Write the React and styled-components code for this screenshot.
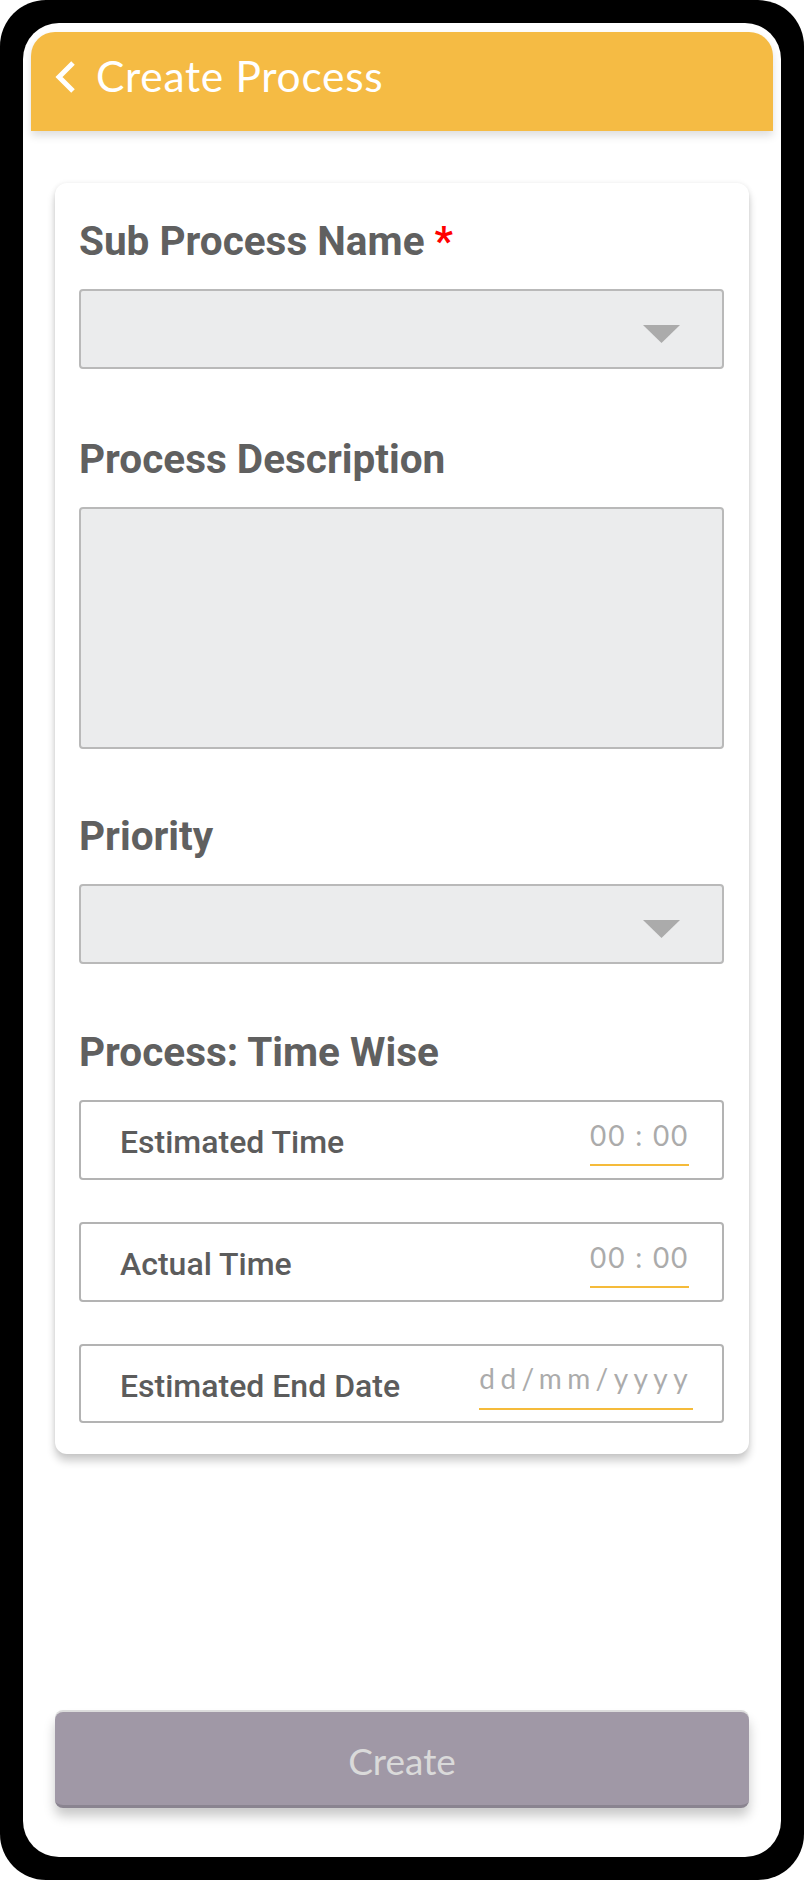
import React from "react";
import styled, { createGlobalStyle } from "styled-components";

const GlobalStyle = createGlobalStyle`
  html, body { margin: 0; padding: 0; background: #fff; }
  * { box-sizing: border-box; }
`;

const Frame = styled.div`
  width: 804px;
  height: 1880px;
  background: #000;
  border-radius: 46px;
  padding: 23px;
`;

const Screen = styled.div`
  height: 100%;
  background: #fff;
  border-radius: 36px;
  display: flex;
  flex-direction: column;
  padding: 9px 0 49px;
  overflow: hidden;
`;

const Header = styled.header`
  position: relative;
  z-index: 1;
  margin: 0 8px;
  height: 99px;
  flex-shrink: 0;
  background: #f5bb44;
  border-radius: 24px 24px 0 0;
  display: flex;
  align-items: center;
  gap: 19px;
  padding: 0 0 12px 24px;
  box-shadow: 0 5px 9px rgba(0, 0, 0, 0.13);
`;

const Title = styled.h1`
  margin: 0;
  font-family: Lato, "Open Sans", sans-serif;
  font-weight: 400;
  font-size: 42.5px;
  line-height: 1.2;
  letter-spacing: 0.7px;
  color: #fff;
`;

const Card = styled.section`
  margin: 52px 32px 0;
  background: #fff;
  border-radius: 12px;
  padding: 35px 25px 31px 24px;
  box-shadow: 0 7px 9px rgba(0, 0, 0, 0.2), 0 0 5px rgba(0, 0, 0, 0.08);
`;

const Group = styled.div`
  margin-top: ${(p) => p.$mt || 0}px;
`;

const Label = styled.div`
  font-family: Roboto, "Liberation Sans", sans-serif;
  font-weight: 700;
  font-size: 40.5px;
  line-height: 46px;
  color: #606060;
  margin-bottom: 25px;
`;

const Required = styled.span`
  color: #ff0000;
  margin-left: 10px;
`;

const Select = styled.div`
  height: 80px;
  background: #ebeced;
  border: 2px solid #b9b9b9;
  border-radius: 4px;
  display: flex;
  justify-content: flex-end;
  align-items: center;
  padding-right: 42px;
`;

const Arrow = styled.svg`
  margin-top: 10px;
  display: block;
`;

const TextArea = styled.textarea`
  display: block;
  width: 100%;
  height: 242px;
  background: #ebeced;
  border: 2px solid #b9b9b9;
  border-radius: 4px;
  resize: none;
  outline: none;
`;

const Row = styled.div`
  height: ${(p) => p.$h || 80}px;
  background: #fff;
  border: 2px solid #b3b3b3;
  border-radius: 4px;
  display: flex;
  align-items: center;
  justify-content: space-between;
  padding: 0 ${(p) => p.$pr}px 0 39px;
  margin-top: ${(p) => p.$mt || 0}px;
`;

const RowLabel = styled.span`
  font-family: Roboto, "Liberation Sans", sans-serif;
  font-weight: 500;
  font-size: 32px;
  line-height: 38px;
  color: #5c5c5c;
  margin-top: 4px;
`;

const Value = styled.span`
  font-family: Lato, "Open Sans", sans-serif;
  font-size: ${(p) => p.$fs}px;
  line-height: 1.2;
  color: #ababab;
  letter-spacing: ${(p) => p.$ls}px;
  padding-top: 5px;
  padding-bottom: ${(p) => p.$pb}px;
  border-bottom: 2px solid #f5bb3a;
  white-space: nowrap;
`;

const Button = styled.button`
  margin: auto 32px 0;
  height: 96px;
  flex-shrink: 0;
  background: #a098a6;
  border: none;
  border-bottom: 3px solid #8a8490;
  border-radius: 8px;
  box-shadow: 0 -2px 0 #dcdcdc, 0 8px 12px rgba(0, 0, 0, 0.22);
  font-family: Lato, "Open Sans", sans-serif;
  font-size: 37px;
  font-weight: 400;
  color: #dadada;
  padding: 4px 0 0;
`;

const Triangle = () => (
  <Arrow width="37" height="18" viewBox="0 0 37 18">
    <polygon points="0,0 37,0 18.5,18" fill="#ababab" />
  </Arrow>
);

const BackIcon = () => (
  <svg width="22" height="32" viewBox="0 0 22 32" style={{ display: "block", marginTop: 2 }}>
    <polyline
      points="18,2 4,16 18,30"
      fill="none"
      stroke="#fff"
      strokeWidth="5"
      strokeLinecap="butt"
      strokeLinejoin="miter"
    />
  </svg>
);

export default function App() {
  return (
    <>
      <GlobalStyle />
      <Frame>
        <Screen>
          <Header>
            <BackIcon />
            <Title>Create Process</Title>
          </Header>
          <Card>
            <Group>
              <Label>
                Sub Process Name<Required>*</Required>
              </Label>
              <Select>
                <Triangle />
              </Select>
            </Group>
            <Group $mt={67}>
              <Label>Process Description</Label>
              <TextArea />
            </Group>
            <Group $mt={64}>
              <Label>Priority</Label>
              <Select>
                <Triangle />
              </Select>
            </Group>
            <Group $mt={65}>
              <Label>Process: Time Wise</Label>
              <Row $pr={33}>
                <RowLabel>Estimated Time</RowLabel>
                <Value $fs={28} $ls={1.8} $pb={11}>00 : 00</Value>
              </Row>
              <Row $pr={33} $mt={42}>
                <RowLabel>Actual Time</RowLabel>
                <Value $fs={28} $ls={1.8} $pb={11}>00 : 00</Value>
              </Row>
              <Row $pr={29} $mt={42} $h={79}>
                <RowLabel>Estimated End Date</RowLabel>
                <Value $fs={28} $ls={5.4} $pb={13}>dd/mm/yyyy</Value>
              </Row>
            </Group>
          </Card>
          <Button>Create</Button>
        </Screen>
      </Frame>
    </>
  );
}
